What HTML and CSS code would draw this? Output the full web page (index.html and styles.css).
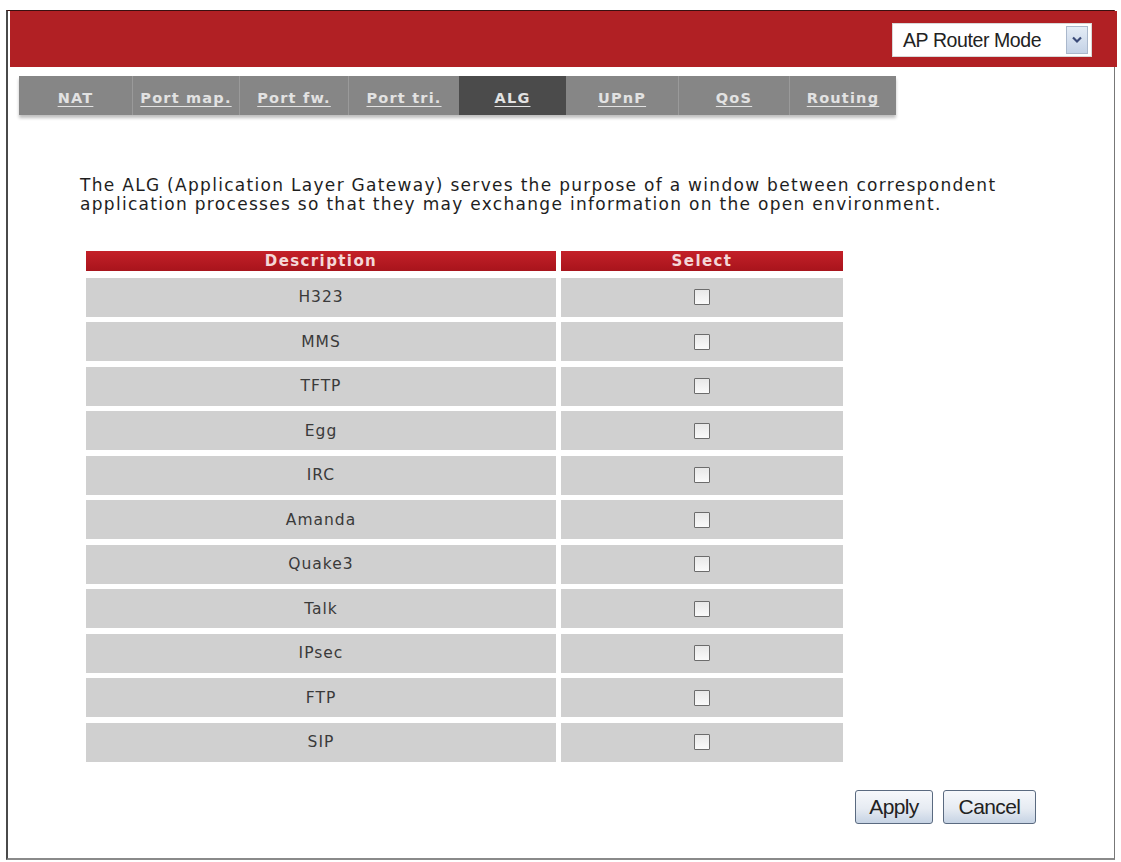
FILE: index.html
```html
<!DOCTYPE html>
<html>
<head>
<meta charset="utf-8">
<link rel="stylesheet" href="styles.css">
</head>
<body>
<div class="frame">
  <div class="header">
    <div class="mode-select">
      <span class="mode-text">AP Router Mode</span>
      <span class="mode-arrow">
        <svg width="12" height="8" viewBox="0 0 12 8"><path d="M2 1.5 L6 5.5 L10 1.5" fill="none" stroke="#3a4a78" stroke-width="2.2"/></svg>
      </span>
    </div>
  </div>
  <nav class="tabs">
    <a class="tab">NAT</a>
    <a class="tab">Port map.</a>
    <a class="tab">Port fw.</a>
    <a class="tab">Port tri.</a>
    <a class="tab active">ALG</a>
    <a class="tab">UPnP</a>
    <a class="tab">QoS</a>
    <a class="tab">Routing</a>
  </nav>
  <p class="intro">The ALG (Application Layer Gateway) serves the purpose of a window between correspondent<br>application processes so that they may exchange information on the open environment.</p>
  <div class="alg-table">
    <div class="th">Description</div>
    <div class="th">Select</div>
    <div class="td">H323</div><div class="td"><span class="cb"></span></div>
    <div class="td">MMS</div><div class="td"><span class="cb"></span></div>
    <div class="td">TFTP</div><div class="td"><span class="cb"></span></div>
    <div class="td">Egg</div><div class="td"><span class="cb"></span></div>
    <div class="td">IRC</div><div class="td"><span class="cb"></span></div>
    <div class="td">Amanda</div><div class="td"><span class="cb"></span></div>
    <div class="td">Quake3</div><div class="td"><span class="cb"></span></div>
    <div class="td">Talk</div><div class="td"><span class="cb"></span></div>
    <div class="td">IPsec</div><div class="td"><span class="cb"></span></div>
    <div class="td">FTP</div><div class="td"><span class="cb"></span></div>
    <div class="td">SIP</div><div class="td"><span class="cb"></span></div>
  </div>
  <div class="actions">
    <button class="btn btn-apply">Apply</button>
    <button class="btn btn-cancel">Cancel</button>
  </div>
</div>
</body>
</html>
```

FILE: styles.css
```css
html, body {
  margin: 0;
  padding: 0;
  background: #ffffff;
}
body {
  font-family: "DejaVu Sans", Verdana, sans-serif;
  color: #2a2a2a;
}
.frame {
  margin: 10px 0 0 6px;
  width: 1106px;
  height: 847px;
  border-left: 2px solid #4a4a4a;
  border-right: 1px solid #777777;
  border-bottom: 2px solid #8a8a8a;
  border-top: 1px solid #3a1010;
  box-sizing: content-box;
  display: flex;
  flex-direction: column;
}
.header {
  height: 56px;
  background: #b12024;
  margin-left: 2px;
  margin-right: -3px;
  display: flex;
  justify-content: flex-end;
  align-items: flex-start;
  padding: 12px 25px 0 0;
  box-sizing: border-box;
}
.mode-select {
  width: 200px;
  height: 34px;
  background: #ffffff;
  display: flex;
  align-items: center;
  box-sizing: border-box;
  border: 1px solid #d8d8d8;
}
.mode-text {
  flex: 1;
  padding-left: 10px;
  font-family: "Liberation Sans", Arial, sans-serif;
  font-size: 19.5px;
  color: #222;
  letter-spacing: -0.4px;
  white-space: nowrap;
}
.mode-arrow {
  width: 22px;
  height: 28px;
  margin-right: 3px;
  background: linear-gradient(#e4ecf6, #c4d2e6);
  border: 1px solid #aab8cc;
  box-sizing: border-box;
  display: flex;
  align-items: center;
  justify-content: center;
}
.tabs {
  margin: 9px 0 0 11px;
  width: 877px;
  height: 39px;
  display: grid;
  grid-template-columns: 113px 107px 109px 111px 107px 112px 111px 107px;
  background: #868686;
  box-shadow: 0 3px 3px rgba(0,0,0,0.25);
}
.tab {
  display: flex;
  align-items: center;
  justify-content: center;
  font-family: "DejaVu Sans", Verdana, sans-serif;
  font-weight: bold;
  font-size: 14.5px;
  letter-spacing: 1.2px;
  color: #e2e2e2;
  text-decoration: underline;
  text-underline-offset: 3px;
  border-left: 1px solid #9a9a9a;
  padding-top: 5px;
  box-sizing: border-box;
  white-space: nowrap;
}
.tab:first-child { border-left: none; }
.tab.active {
  background: #4b4b4b;
  border-left: none;
}
.tab.active + .tab { border-left: none; }
.intro {
  margin: 61px 0 0 72px;
  font-size: 17px;
  letter-spacing: 1.3px;
  line-height: 19px;
  color: #1e1e1e;
  white-space: nowrap;
}
.alg-table {
  margin: 37px 0 0 78px;
  width: 757px;
  display: grid;
  grid-template-columns: 470px 282px;
  column-gap: 5px;
  row-gap: 5.5px;
}
.th {
  height: 20px;
  background: linear-gradient(#c42028, #a8141c);
  color: #f4d8d8;
  font-weight: bold;
  font-size: 15px;
  letter-spacing: 1.4px;
  text-align: center;
  line-height: 20px;
  margin-bottom: 1px;
}
.td {
  height: 39px;
  background: #d0d0d0;
  display: flex;
  align-items: center;
  justify-content: center;
  font-size: 15.5px;
  letter-spacing: 1px;
  color: #3a3a3a;
}
.cb {
  width: 16px;
  height: 16px;
  border: 1px solid #6c6c6c;
  border-radius: 1px;
  background: linear-gradient(#e8e8e8, #fafafa);
  box-sizing: border-box;
}
.actions {
  display: flex;
  justify-content: flex-end;
  gap: 10px;
  margin: 28px 78px 0 0;
}
.btn {
  height: 34px;
  font-family: "Liberation Sans", Arial, sans-serif;
  font-size: 21px;
  color: #222;
  border: 1px solid #5a6a80;
  border-radius: 3px;
  background: linear-gradient(#f6f8fb 0%, #e6ebf2 55%, #c6d3e4 100%);
  padding: 0;
  letter-spacing: -0.6px;
}
.btn-apply { width: 78px; }
.btn-cancel { width: 93px; }
```
